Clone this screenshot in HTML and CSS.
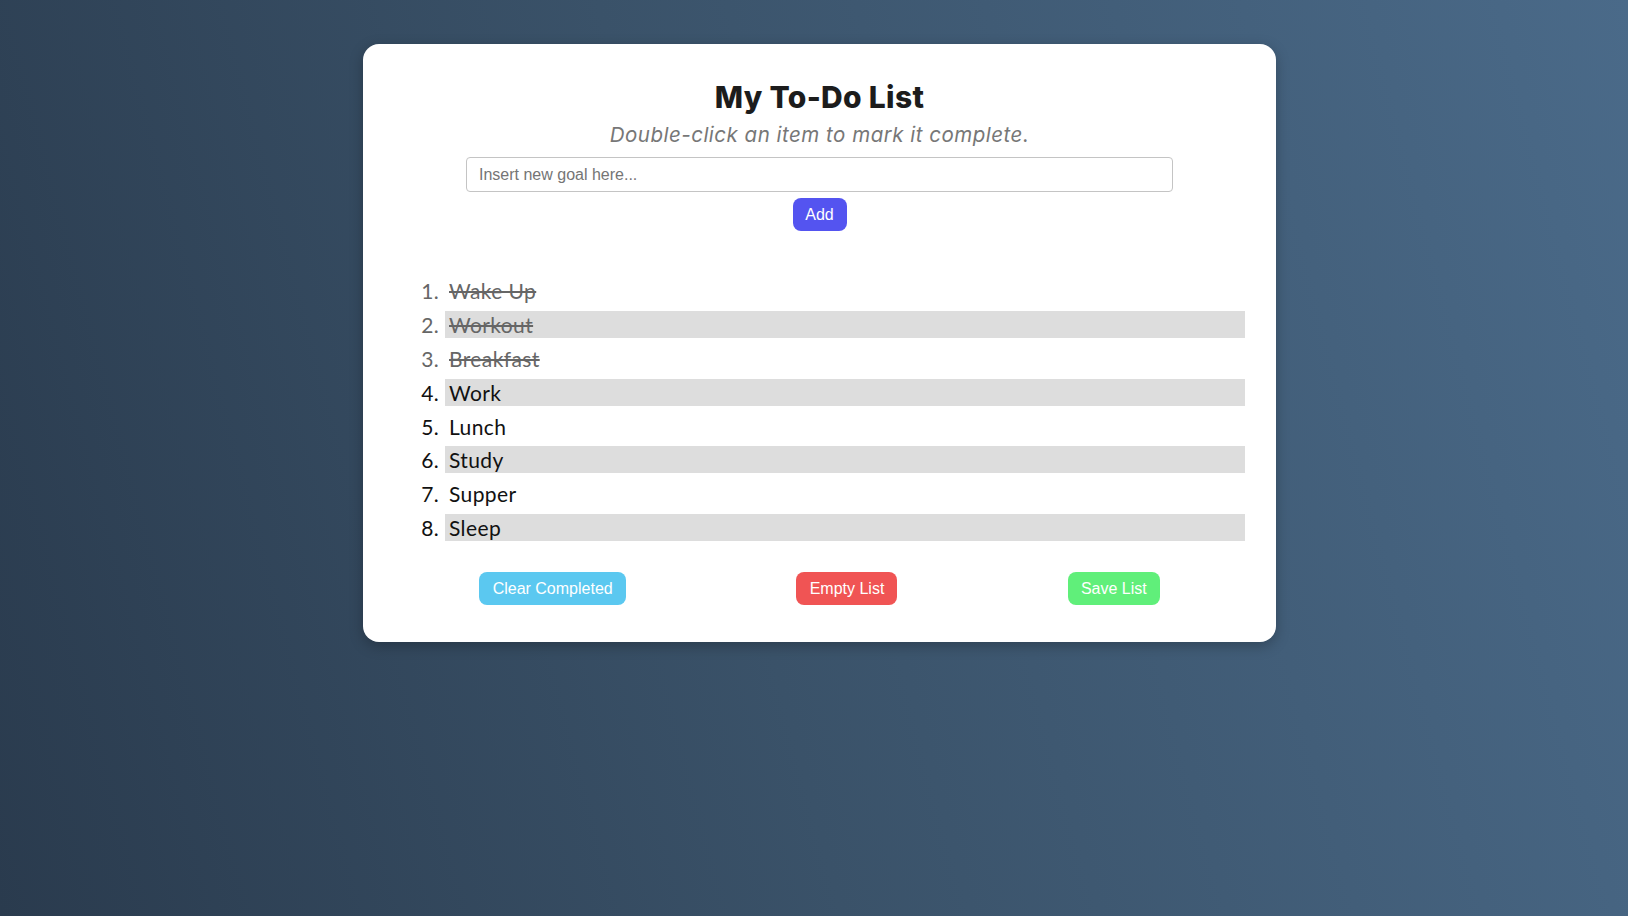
FILE: index.html
```html
<!DOCTYPE html>
<html lang="en">
<head>
<meta charset="utf-8">
<title>My To-Do List</title>
<link rel="stylesheet" href="styles.css">
</head>
<body>
<main class="card">
  <header class="head">
    <h1 class="title">My To-Do List</h1>
    <p class="subtitle">Double-click an item to mark it complete.</p>
    <input class="goal-input" type="text" placeholder="Insert new goal here...">
    <button class="btn btn-add">Add</button>
  </header>
  <ol class="todo">
    <li class="item done">Wake Up</li>
    <li class="item done">Workout</li>
    <li class="item done">Breakfast</li>
    <li class="item">Work</li>
    <li class="item">Lunch</li>
    <li class="item">Study</li>
    <li class="item">Supper</li>
    <li class="item">Sleep</li>
  </ol>
  <footer class="actions">
    <button class="btn btn-clear">Clear Completed</button>
    <button class="btn btn-empty">Empty List</button>
    <button class="btn btn-save">Save List</button>
  </footer>
</main>
</body>
</html>
```

FILE: styles.css
```css
html, body {
  margin: 0;
  height: 100%;
}
body {
  background: linear-gradient(75deg, #2a3b4e 0%, #3a5269 45%, #4a6a89 100%);
  padding: 44px 0 0 11px;
  box-sizing: border-box;
  font-family: "Liberation Sans", Arial, sans-serif;
}
.card {
  width: 913px;
  margin: 0 auto;
  box-sizing: border-box;
  background: #fff;
  border-radius: 16px;
  padding: 31px 31px 37px;
  box-shadow: 0 4px 14px rgba(0, 0, 0, 0.25);
}
.head {
  display: flex;
  flex-direction: column;
  align-items: center;
}
.title {
  margin: 0;
  font-family: Inter, "Noto Sans", sans-serif;
  font-weight: 800;
  font-size: 30px;
  line-height: 44px;
  letter-spacing: 0.3px;
  color: #1c1c1c;
}
.subtitle {
  margin: 2px 0 0;
  font-family: Inter, "Noto Sans", sans-serif;
  font-style: italic;
  font-weight: 400;
  font-size: 20.5px;
  line-height: 28px;
  letter-spacing: 0.5px;
  color: #777;
}
.goal-input {
  margin-top: 8px;
  width: 707px;
  height: 35px;
  box-sizing: border-box;
  border: 1px solid #c4c4c4;
  border-radius: 4px;
  padding: 0 12px;
  font-family: "Liberation Sans", Arial, sans-serif;
  font-size: 16px;
  color: #333;
}
.goal-input::placeholder {
  color: #757575;
}
.btn {
  border: none;
  border-radius: 8px;
  height: 33px;
  padding: 0;
  font-family: "Liberation Sans", Arial, sans-serif;
  font-size: 16px;
  color: #fff;
}
.btn-add {
  margin-top: 6px;
  width: 54px;
  background: #5454f0;
}
.todo {
  margin: 46px 0 0;
  padding: 0 0 0 51px;
  font-family: Lato, "Noto Sans", sans-serif;
  font-size: 21px;
  letter-spacing: 0.4px;
  color: #111;
}
.item {
  height: 27px;
  line-height: 27px;
  padding-left: 4px;
  margin-bottom: 6.9px;
}
.item::marker {
  color: #111;
}
.item:nth-child(even) {
  background: #dddddd;
}
.item.done {
  color: #666;
  text-decoration: line-through;
}
.item.done::marker {
  color: #666;
}
.actions {
  margin-top: 31px;
  display: flex;
  justify-content: space-around;
}
.btn-clear { background: #5bc8f0; width: 147px; }
.btn-empty { background: #f05454; width: 101px; }
.btn-save { background: #60ef7a; width: 92px; }
```
